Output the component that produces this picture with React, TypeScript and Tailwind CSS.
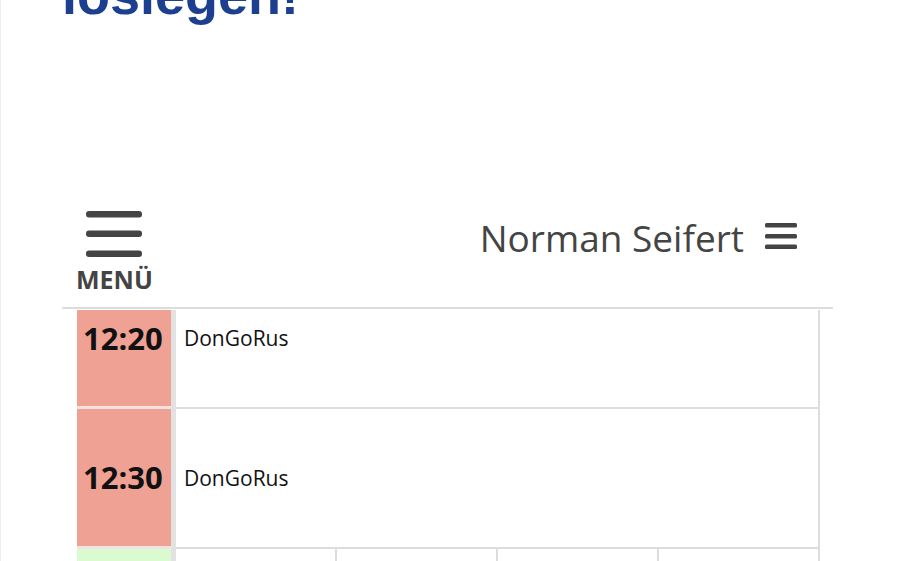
import React from 'react';

const rows = [
    { time: '12:20', name: 'DonGoRus', height: 'h-[99px]', align: 'items-start' },
    { time: '12:30', name: 'DonGoRus', height: 'h-[140px]', align: 'items-center' },
];

function BigBurger() {
    return (
        <svg width="56" height="46" viewBox="0 0 56 46" fill="#444">
            <rect x="0" y="0" width="56" height="6.5" rx="3" />
            <rect x="0" y="19.5" width="56" height="6.5" rx="3" />
            <rect x="0" y="39.5" width="56" height="6.5" rx="3" />
        </svg>
    );
}

function SmallBurger() {
    return (
        <svg width="32" height="26" viewBox="0 0 32 26" fill="#444">
            <rect x="0" y="0" width="32" height="4.5" rx="1.5" />
            <rect x="0" y="11" width="32" height="4.5" rx="1.5" />
            <rect x="0" y="21.5" width="32" height="4.5" rx="1.5" />
        </svg>
    );
}

export default function App() {
    return (
        <div className="h-[561px] w-full overflow-hidden bg-white border-l border-[#eeeeee] font-['Open_Sans',sans-serif]">
            <div className="ml-[61px] w-[771px]">
                <h1 className="mt-[-32px] text-[54px] leading-none font-bold text-[#1d3f8f] font-['Liberation_Sans',Arial,sans-serif]">
                    loslegen!
                </h1>

                <header className="mt-[188px] h-[99px] flex justify-between items-start border-b-2 border-[#dddddd]">
                    <button className="ml-[14px] mt-[1px] flex flex-col items-center">
                        <BigBurger />
                        <span className="mt-[10px] text-[25px] leading-none font-bold text-[#444444]">MENÜ</span>
                    </button>
                    <div className="mt-[9px] mr-[36px] flex items-start">
                        <span className="text-[37px] leading-none text-[#444444]">Norman Seifert</span>
                        <div className="ml-[21px] mt-[4px]">
                            <SmallBurger />
                        </div>
                    </div>
                </header>

                <div className="mt-px ml-[15px] w-[743px]">
                    {rows.map((row) => (
                        <div key={row.time} className={`flex ${row.height}`}>
                            <div className={`w-[94px] flex ${row.align} bg-[#efa193] border-b-[3px] border-[#f3e3e0] pl-[6px]`}>
                                <span className={`text-[31px] leading-none font-bold text-[#111111] ${row.align === 'items-start' ? 'mt-[13px]' : ''}`}>
                                    {row.time}
                                </span>
                            </div>
                            <div className="w-[5px] bg-[#e2e2e2]" />
                            <div className={`flex-1 flex ${row.align} border-b-2 border-r-2 border-[#dddddd] pl-[8px]`}>
                                <span className={`text-[21px] leading-none font-medium text-[#111111] ${row.align === 'items-start' ? 'mt-[18px]' : ''}`}>
                                    {row.name}
                                </span>
                            </div>
                        </div>
                    ))}
                    <div className="flex h-[40px]">
                        <div className="w-[94px] bg-[#dafbd0]" />
                        <div className="w-[5px] bg-[#e2e2e2]" />
                        <div className="flex-1 grid grid-cols-4">
                            <div className="border-r-2 border-[#dddddd]" />
                            <div className="border-r-2 border-[#dddddd]" />
                            <div className="border-r-2 border-[#dddddd]" />
                            <div className="border-r-2 border-[#dddddd]" />
                        </div>
                    </div>
                </div>
            </div>
        </div>
    );
}
